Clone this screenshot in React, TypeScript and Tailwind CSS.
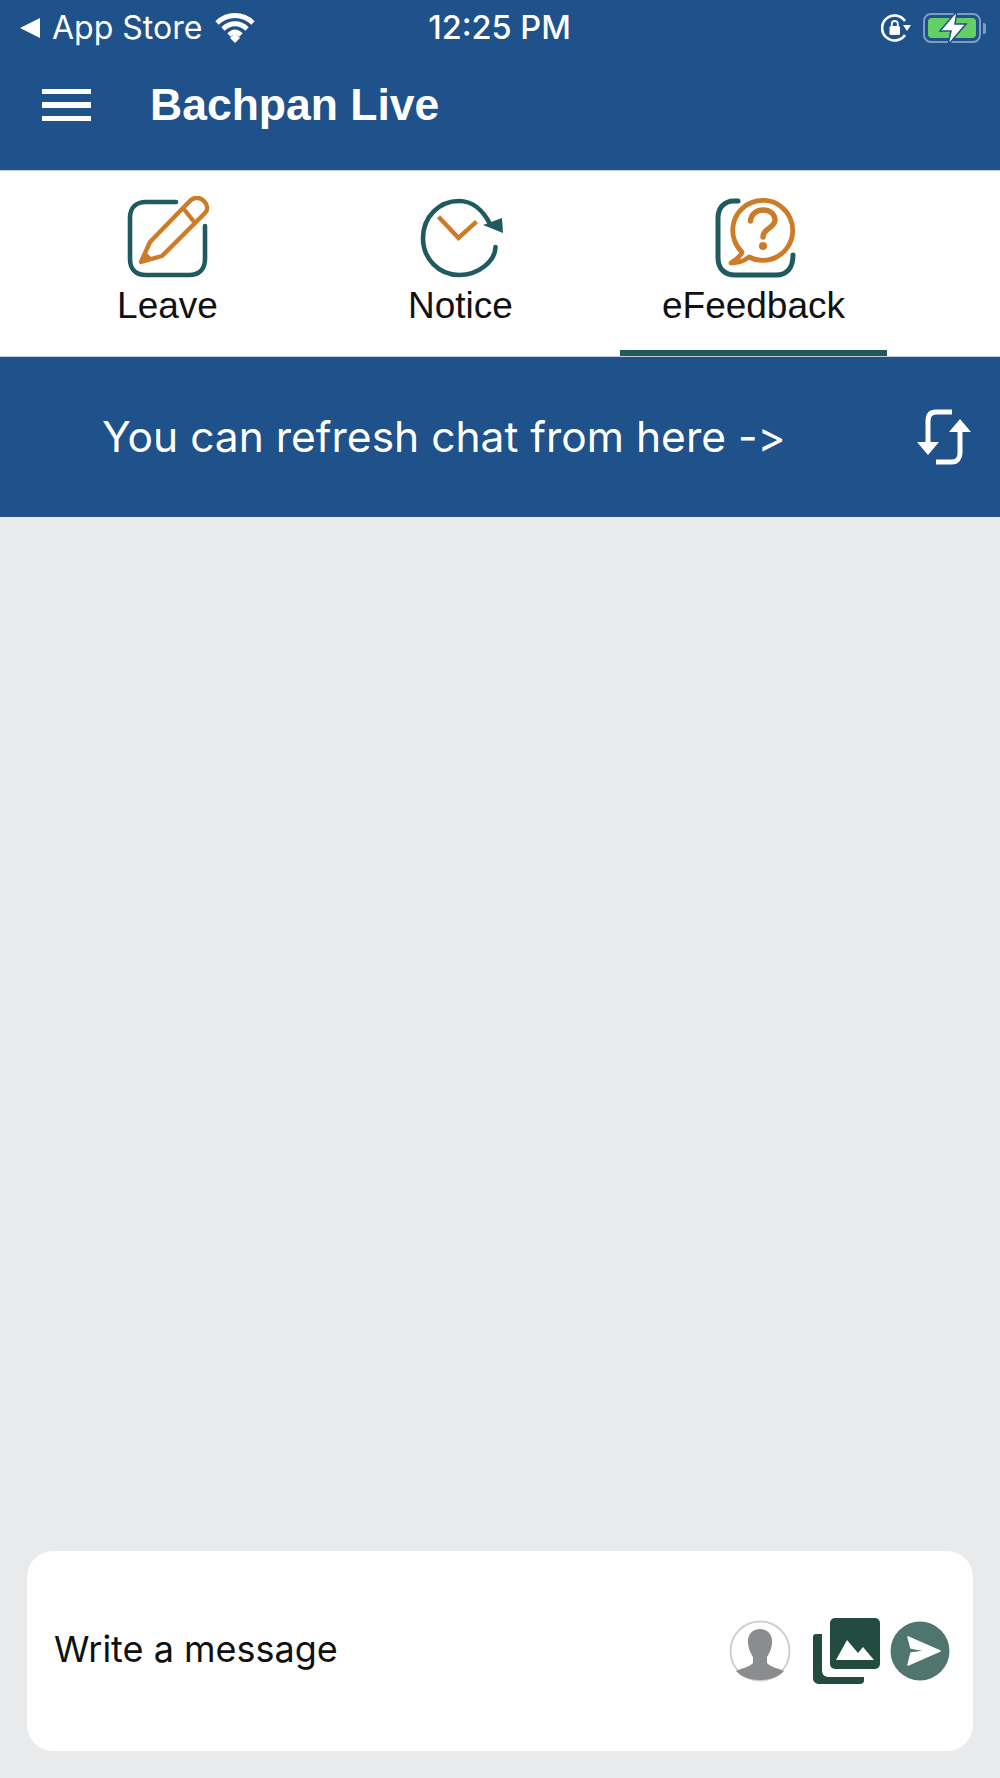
const TEAL = "#1f5a5e";
const ORANGE = "#cd7b27";

const LeaveIcon = () => (
  <svg width="84" height="84" viewBox="0 0 84 84" fill="none">
    <path d="M50 6H20C10 6 4 12 4 22V63C4 73 10 79 20 79H63C73 79 79 73 79 63V30" stroke={TEAL} strokeWidth="4.6" strokeLinecap="round" />
    <path d="M15 66L24 46L57 12L69 27L36 60Z" stroke={ORANGE} strokeWidth="4.4" strokeLinejoin="round" />
    <path d="M57 12L65 4C69 1 74 1 78 5C82 9 82 14 79 17L69 27" stroke={ORANGE} strokeWidth="4.4" />
    <path d="M14 67L20 56L27 63Z" fill={ORANGE} />
  </svg>
);

const NoticeIcon = () => (
  <svg width="84" height="84" viewBox="0 0 84 84" fill="none">
    <path d="M71 28C64 14 53 5 40 5C20 5 4 21 4 42C4 63 20 79 40 79C60 79 76 65 76.500 51" stroke={TEAL} strokeWidth="4.6" strokeLinecap="round" />
    <path d="M64 29L83 22L84 37Z" fill={TEAL} />
    <path d="M19.500 20.700L39.500 42L57.500 25.700" stroke={ORANGE} strokeWidth="4.4" />
  </svg>
);

const FeedbackIcon = () => (
  <svg width="84" height="84" viewBox="0 0 84 84" fill="none">
    <path d="M26 5H22C12 5 6 12 6 22V62C6 73 13 79 23 79H64C75 79 81 72 81 59" stroke={TEAL} strokeWidth="5" strokeLinecap="round" />
    <path d="M30 56A30 30 0 1 1 37 61C32 65 26 67 19 67C25 63 29 60 30 56Z" fill="#fff" stroke={ORANGE} strokeWidth="4.800" strokeLinejoin="round" />
    <path d="M38.500 25C39 18 45 14 51 14C58 14 63 18 63 24C63 32 51 32 51 41" stroke={ORANGE} strokeWidth="5.400" strokeLinecap="round" />
    <circle cx="51" cy="50" r="4" fill={ORANGE} />
  </svg>
);

const tabs = [
  { label: "Leave", icon: <LeaveIcon /> },
  { label: "Notice", icon: <NoticeIcon /> },
  { label: "eFeedback", icon: <FeedbackIcon />, active: true },
];

export default function App() {
  return (
    <div className="w-[1000px] h-[1778px] flex flex-col bg-[#e9eaec] font-['Inter',sans-serif]">
      <header className="h-[170px] bg-[#1f518b] text-white">
        <div className="h-[56px] flex items-center pl-[20px] pr-[14px]">
          <div className="flex-1 flex items-center">
            <svg width="20" height="20" viewBox="0 0 20 20" fill="#fff"><path d="M0 10L20 0V20Z" /></svg>
            <span className="ml-[12px] text-[32px] leading-none">App Store</span>
            <svg className="ml-[13px]" width="40" height="30" viewBox="0 0 40 30" fill="none" stroke="#fff" strokeWidth="4.800">
              <path d="M2 10C12 0 28 0 38 10" />
              <path d="M8 16C15 9 25 9 32 16" />
              <path d="M14 22C18 18 22 18 26 22" />
              <path d="M15 25L20 20L25 25L20 30Z" fill="#fff" stroke="none" />
            </svg>
          </div>
          <span className="mr-[7px] text-[32.5px] leading-none font-medium">12:25 PM</span>
          <div className="flex-1 flex items-center justify-end">
            <svg width="30" height="30" viewBox="0 0 30 30" fill="none">
              <path d="M24 8A12.500 12.500 0 1 0 24 22" stroke="#fff" strokeWidth="2.600" />
              <path d="M22 12H30L26 18Z" fill="#fff" />
              <rect x="8.500" y="13" width="10.500" height="9" rx="1.500" fill="#fff" />
              <path d="M10.800 13V11A3 3 0 0 1 16.800 11V13" stroke="#fff" strokeWidth="1.800" />
            </svg>
            <div className="relative ml-[12px] w-[58px] h-[30px] rounded-[8px] border-[2.5px] border-[#7f9cbf] p-[3px]">
              <div className="h-full rounded-[4px] bg-[#63cf65]" />
              <svg className="absolute left-[12px] top-[-5px]" width="32" height="36" viewBox="0 0 32 36">
                <path d="M20 1L3 21H14L11 35L29 14H18Z" fill="#fff" stroke="#1f518b" strokeWidth="1.500" />
              </svg>
            </div>
            <div className="ml-[2px] w-[3px] h-[11px] rounded-r-[2px] bg-[#7f9cbf]" />
          </div>
        </div>
        <div className="flex items-center h-[98px] pl-[42px]">
          <div className="w-[49px] flex flex-col gap-[8px]">
            <div className="h-[5.5px] bg-white" />
            <div className="h-[5.5px] bg-white" />
            <div className="h-[5.5px] bg-white" />
          </div>
          <h1 className="ml-[59px] text-[44.5px] leading-none font-bold font-['Liberation_Sans',sans-serif]">Bachpan Live</h1>
        </div>
      </header>

      <nav className="h-[187px] bg-white border-t border-b border-[#c8ccd2] pl-[21px] flex font-['Liberation_Sans',sans-serif]">
        {tabs.map((tab) => (
          <div key={tab.label} className="w-[293px] flex flex-col items-center pt-[25px]">
            <div className="h-[84px]">{tab.icon}</div>
            <span className="mt-[4px] text-[37px] leading-[44px] text-[#111]">{tab.label}</span>
            <div className={`mt-auto w-[267px] h-[6px] ${tab.active ? "bg-[#1f5a5e]" : ""}`} />
          </div>
        ))}
      </nav>

      <div className="h-[160px] bg-[#1f518b] text-white flex items-center pl-[102px] pr-[29px] justify-between">
        <span className="text-[42.5px] leading-none [font-variant-ligatures:none] [font-feature-settings:'calt'_0]">You can refresh chat from here -&gt;</span>
        <svg width="54" height="56" viewBox="0 0 54 56" fill="none" stroke="#fff" strokeWidth="5">
          <path d="M35 3H19C13 3 11 7 11 12V40" />
          <path d="M0 33L11 46L22 33Z" fill="#fff" stroke="none" />
          <path d="M19 53H35C40 53 43 49 43 44V16" />
          <path d="M32 23L43 10L54 23Z" fill="#fff" stroke="none" />
        </svg>
      </div>

      <div className="flex-1 flex flex-col justify-end px-[27px] pb-[27px]">
        <div className="h-[200px] bg-white rounded-[26px] flex items-center pl-[27px] pr-[23px]">
          <span className="flex-1 pb-[5px] text-[36px] leading-none text-[#111]">Write a message</span>
          <svg width="62" height="62" viewBox="0 0 62 62">
            <circle cx="31" cy="31" r="29.500" fill="#fff" stroke="#cfd0d2" strokeWidth="2" />
            <path d="M31 9C39 9 44 15 43 24C42 30 40 34 38 37V43C41 47 49 48 55 51C50 57 41 60 31 60C21 60 12 57 7 51C13 48 21 47 24 43V37C22 34 20 30 19 24C18 15 23 9 31 9Z" fill="#8a8c8e" />
          </svg>
          <svg className="ml-[22px]" width="67" height="67" viewBox="0 0 67 67">
            <path d="M3 16H9V52C9 57 12 59 16 59H51V63C51 65 49 66 47 66H7C3 66 0 64 0 60V19C0 17 1 16 3 16Z" fill="#234b3f" />
            <rect x="17" y="0" width="50" height="51" rx="5" fill="#234b3f" />
            <path d="M23 42L34 22L45 35L50 29L61 42Z" fill="#fff" />
          </svg>
          <svg className="ml-[10px]" width="60" height="60" viewBox="0 0 60 60">
            <circle cx="30" cy="30" r="29.500" fill="#50756f" />
            <path d="M18 16L50 30L18 44L21 32L37 30L21 27Z" fill="#fff" stroke="#fff" strokeWidth="1.500" strokeLinejoin="round" />
          </svg>
        </div>
      </div>
    </div>
  );
}
